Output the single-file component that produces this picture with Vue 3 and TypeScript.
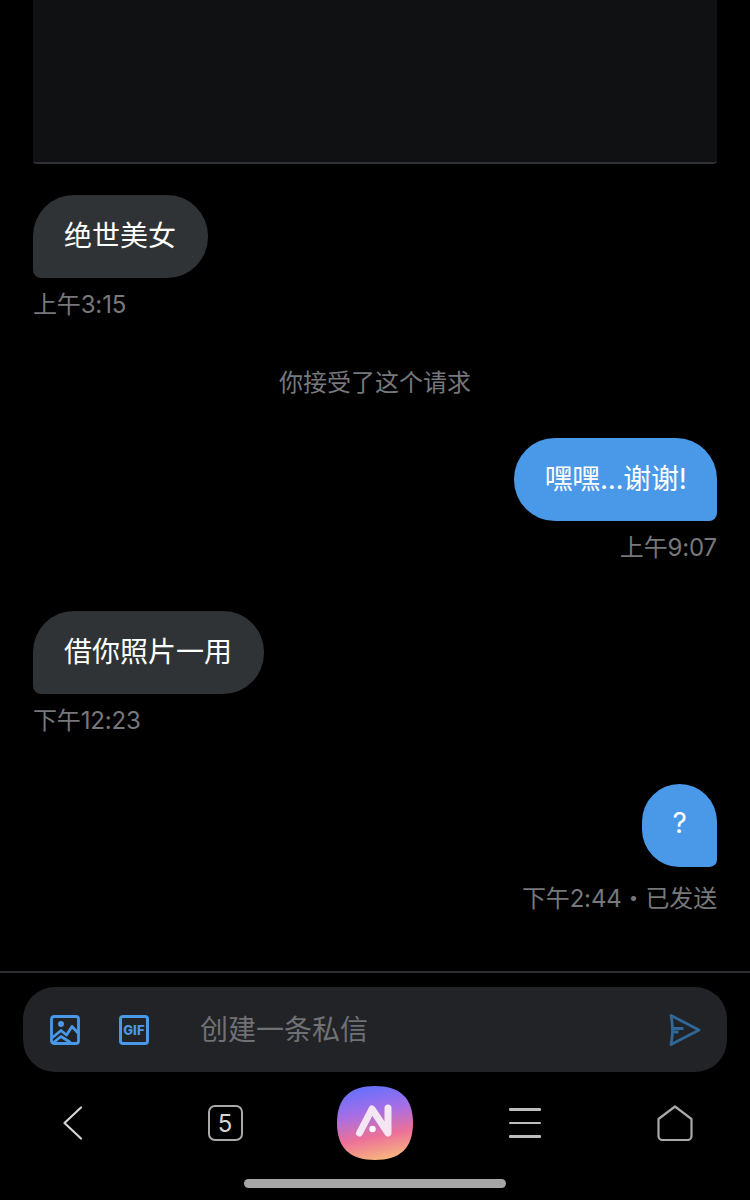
<script setup lang="ts">
interface Msg {
  text: string;
  time: string;
  mine: boolean;
}

const first: Msg = { text: '绝世美女', time: '上午3:15', mine: false };
const rest: Msg[] = [
  { text: '嘿嘿...谢谢!', time: '上午9:07', mine: true },
  { text: '借你照片一用', time: '下午12:23', mine: false },
  { text: '?', time: '下午2:44・已发送', mine: true },
];
</script>

<template>
  <div class="page">
    <div class="thread">
      <div class="media"></div>

      <div class="msg">
        <div class="bubble">{{ first.text }}</div>
        <div class="time">{{ first.time }}</div>
      </div>

      <div class="notice">你接受了这个请求</div>

      <div v-for="m in rest" :key="m.time" class="msg" :class="{ mine: m.mine }">
        <div class="bubble">{{ m.text }}</div>
        <div class="time">{{ m.time }}</div>
      </div>
    </div>

    <div class="composer">
      <div class="input">
        <svg class="ico" width="30" height="30" viewBox="0 0 30 30" fill="none" stroke="#4a98e8" stroke-width="2.800" stroke-linejoin="round">
          <rect x="1.500" y="1.500" width="27" height="27" rx="2.500" />
          <circle cx="11" cy="9" r="3" fill="#4a98e8" stroke="none" />
          <path d="M2.500 22.500l8.500-7 5.500 4.500 5.500-8.500 6.500 7M3.500 27.500l7.500-6 9.500 6" />
        </svg>
        <div class="gif">GIF</div>
        <div class="placeholder">创建一条私信</div>
        <svg class="send" width="32" height="34" viewBox="0 0 32 34" fill="none" stroke="#2f6797" stroke-width="2.800" stroke-linejoin="round">
          <path d="M2 2.500L30 17 2 31.500Q5 17 2 2.500zM4.500 15.500h10M4.500 19h5" />
        </svg>
      </div>
    </div>

    <div class="nav">
      <svg width="36" height="36" viewBox="0 0 36 36" fill="none" stroke="#d4d4d4" stroke-width="2.200" stroke-linecap="round" stroke-linejoin="round">
        <path d="M24 2.500L7.500 18 24 33.500" />
      </svg>
      <div class="tabs">5</div>
      <svg class="logo" width="76" height="74" viewBox="0 0 76 74">
        <defs>
          <linearGradient id="logo-bg" x1="0.4" y1="0" x2="0.6" y2="1">
            <stop offset="0.04" stop-color="#6d70fb" />
            <stop offset="0.34" stop-color="#a56ee6" />
            <stop offset="0.68" stop-color="#ec7198" />
            <stop offset="1" stop-color="#f9b67f" />
          </linearGradient>
        </defs>
        <path d="M38 0C63 0 76 12 76 37S63 74 38 74 0 62 0 37 13 0 38 0z" fill="url(#logo-bg)" />
        <path d="M22.500 47L35 23l16 24V22" fill="none" stroke="#f4e6f3" stroke-width="7" stroke-linecap="round" stroke-linejoin="round" />
        <circle cx="35.500" cy="43" r="3.200" fill="#fff" />
      </svg>
      <div class="menu"><i></i><i></i><i></i></div>
      <svg width="36" height="36" viewBox="0 0 36 36" fill="none" stroke="#a9a9a9" stroke-width="2.200" stroke-linejoin="round">
        <path d="M18 1.500L34.500 14v17a4 4 0 0 1-4 4h-25a4 4 0 0 1-4-4V14z" />
      </svg>
    </div>

    <div class="home-bar"></div>
  </div>
</template>

<style scoped>
.page {
  width: 750px;
  height: 1200px;
  background: #000;
  display: flex;
  flex-direction: column;
  overflow: hidden;
  font-family: Inter, "Noto Sans CJK SC", sans-serif;
  color: #fff;
}

.thread {
  height: 973px;
  flex-shrink: 0;
  box-sizing: border-box;
  padding: 0 33px;
  border-bottom: 2px solid #2b2d30;
  display: flex;
  flex-direction: column;
}

.media {
  height: 164px;
  flex-shrink: 0;
  box-sizing: border-box;
  background: #0f1113;
  border-bottom: 2px solid #2e3034;
  border-radius: 0 0 4px 4px;
  margin-bottom: 31px;
}

.msg {
  display: flex;
  flex-direction: column;
  align-items: flex-start;
  margin-bottom: 48px;
}

.msg.mine {
  align-items: flex-end;
}

.bubble {
  height: 83px;
  box-sizing: border-box;
  padding: 0 31.5px 5px 31px;
  display: flex;
  align-items: center;
  font-size: 28px;
  background: #2f3336;
  border-radius: 41px 41px 41px 8px;
}

.mine .bubble {
  background: #4a98e8;
  letter-spacing: -0.3px;
  padding: 0 30.5px 5px;
  border-radius: 41px 41px 8px 41px;
}

.time {
  margin-top: 12px;
  height: 30px;
  line-height: 30px;
  font-size: 24px;
  letter-spacing: -0.15px;
  color: #76787c;
}

.msg:last-child .time {
  margin-top: 17px;
}

.notice {
  height: 30px;
  line-height: 30px;
  text-align: center;
  font-size: 24px;
  color: #76787c;
  margin-bottom: 40px;
}

.composer {
  padding: 14px 23px 0;
}

.input {
  height: 85px;
  border-radius: 32px;
  background: #212327;
  display: flex;
  align-items: center;
  padding: 0 26px 0 27px;
}

.gif {
  margin-left: 39px;
  width: 30px;
  height: 30px;
  box-sizing: border-box;
  border: 3px solid #4a98e8;
  border-radius: 4px;
  color: #4a98e8;
  font-size: 13px;
  font-weight: 800;
  letter-spacing: 0.2px;
  display: flex;
  align-items: center;
  justify-content: center;
}

.placeholder {
  margin-left: 51px;
  flex: 1;
  font-size: 28px;
  padding-bottom: 3px;
  color: #6f7175;
}

.nav {
  height: 88px;
  margin-top: 7px;
  display: grid;
  grid-template-columns: repeat(5, 150px);
  align-items: center;
  justify-items: center;
}

.tabs {
  width: 35px;
  height: 36px;
  box-sizing: border-box;
  border: 2px solid #a9a9a9;
  border-radius: 7px;
  font-size: 24px;
  color: #d4d4d4;
  display: flex;
  align-items: center;
  justify-content: center;
}

.menu {
  width: 32px;
  display: flex;
  flex-direction: column;
  gap: 11px;
}

.menu i {
  height: 2.500px;
  background: #bdbdbd;
  border-radius: 1px;
}

.home-bar {
  width: 262px;
  height: 9px;
  margin: 12px auto 0;
  border-radius: 4.500px;
  background: #a6a6a6;
}
</style>

<style>
body {
  background: #000;
}
</style>
